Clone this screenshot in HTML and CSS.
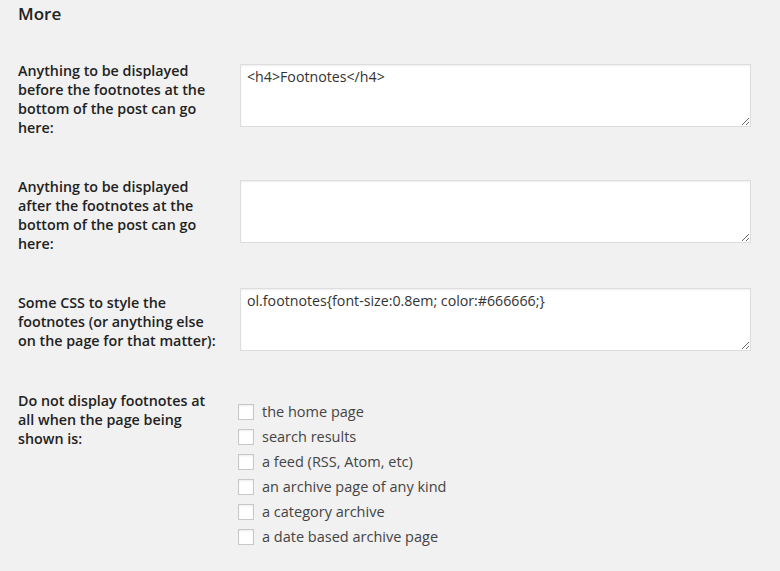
FILE: index.html
```html
<!DOCTYPE html>
<html>
<head>
<meta charset="utf-8">
<link rel="stylesheet" href="styles.css">
</head>
<body>
<h3 class="title">More</h3>
<div class="form-table">
  <div class="row">
    <div class="th">Anything to be displayed<br>before the footnotes at the<br>bottom of the post can go<br>here:</div>
    <div class="td td-tall"><textarea class="ta">&lt;h4&gt;Footnotes&lt;/h4&gt;</textarea></div>
  </div>
  <div class="row">
    <div class="th">Anything to be displayed<br>after the footnotes at the<br>bottom of the post can go<br>here:</div>
    <div class="td td-tall"><textarea class="ta"></textarea></div>
  </div>
  <div class="row">
    <div class="th">Some CSS to style the<br>footnotes (or anything else<br>on the page for that matter):</div>
    <div class="td td-short"><textarea class="ta">ol.footnotes{font-size:0.8em; color:#666666;}</textarea></div>
  </div>
  <div class="row">
    <div class="th">Do not display footnotes at<br>all when the page being<br>shown is:</div>
    <div class="td td-list">
      <ul class="checks">
        <li><span class="box"></span>the home page</li>
        <li><span class="box"></span>search results</li>
        <li><span class="box"></span>a feed (RSS, Atom, etc)</li>
        <li><span class="box"></span>an archive page of any kind</li>
        <li><span class="box"></span>a category archive</li>
        <li><span class="box"></span>a date based archive page</li>
      </ul>
    </div>
  </div>
</div>
</body>
</html>
```
FILE: styles.css
```css
html, body {
  margin: 0;
  padding: 0;
  background: #f1f1f1;
}
body {
  font-family: "Open Sans", "Liberation Sans", sans-serif;
  color: #444;
  font-size: 13px;
  padding: 0 18px;
}
.title {
  margin: 0;
  padding-top: 4px;
  font-size: 17px;
  line-height: 20px;
  font-weight: 600;
  color: #222;
}
.form-table {
  padding-top: 17px;
}
.row {
  display: grid;
  grid-template-columns: 222px 511px;
}
.th {
  padding: 20px 0 20px 0;
  font-size: 14.3px;
  line-height: 19px;
  font-weight: 600;
  color: #222;
  white-space: nowrap;
}
.td-tall {
  padding-top: 23px;
}
.td-short {
  padding-top: 15px;
  padding-bottom: 20px;
}
.td-list {
  padding-top: 15px;
  padding-bottom: 15px;
}
.ta {
  display: block;
  box-sizing: border-box;
  width: 511px;
  height: 63px;
  margin: 0;
  padding: 2px 6px;
  border: 1px solid #ddd;
  background: #fff;
  box-shadow: inset 0 1px 2px rgba(0,0,0,0.07);
  font-family: "Open Sans", "Liberation Sans", sans-serif;
  font-size: 14.2px;
  line-height: 19px;
  color: #333;
  resize: vertical;
  outline: none;
}
.checks {
  list-style: none;
  margin: 0;
  padding: 13px 0 0;
}
.checks li {
  display: flex;
  align-items: center;
  height: 25px;
  font-size: 14.5px;
  color: #444;
}
.box {
  width: 14px;
  height: 14px;
  border: 1px solid #c8c8c8;
  background: #fff;
  box-shadow: inset 0 1px 2px rgba(0,0,0,0.08);
  margin: 0 8px 0 -2px;
  flex: none;
}
```
